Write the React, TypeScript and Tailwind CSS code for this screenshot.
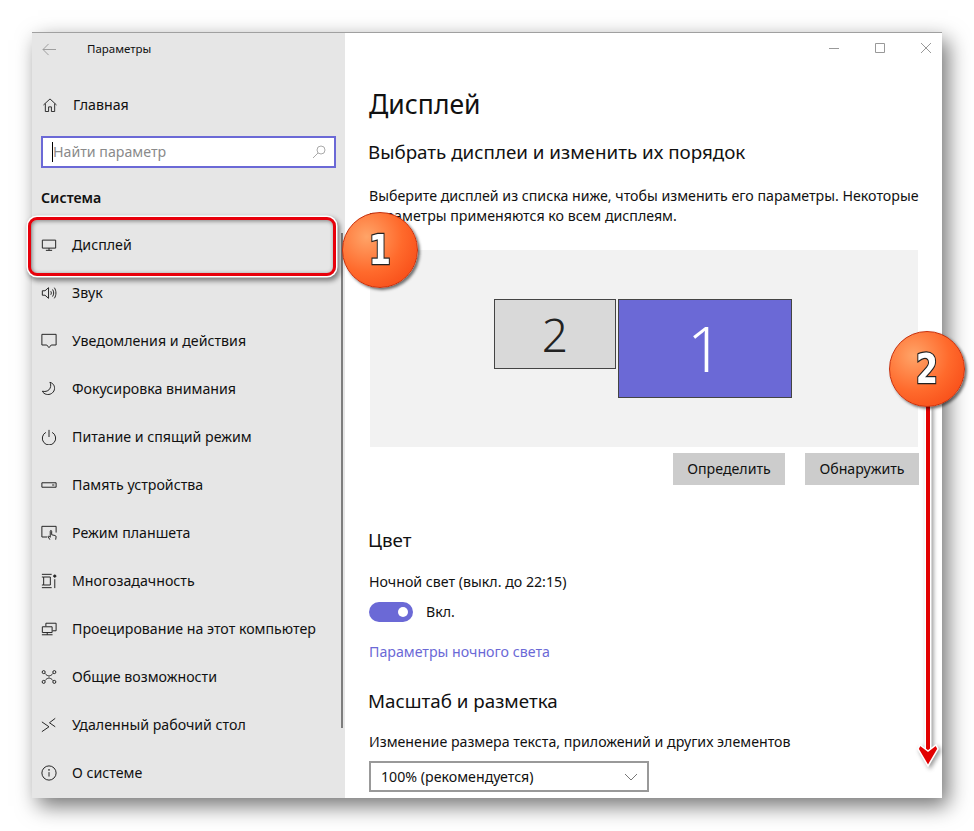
import React from 'react';

const font = 'font-["Noto_Sans",sans-serif]';

function Ico({ children }: { children: React.ReactNode }) {
  return (
    <svg width={16} height={16} viewBox="0 0 18 18" fill="none" stroke="#222" strokeWidth="1.100" className="shrink-0">
      {children}
    </svg>
  );
}

const items: { label: string; icon: React.ReactNode }[] = [
  {
    label: 'Дисплей',
    icon: (
      <Ico>
        <path d="M1.500 3.500h15v9h-15zM9 12.500v2.500M5.500 15h7" />
      </Ico>
    ),
  },
  {
    label: 'Звук',
    icon: (
      <Ico>
        <path d="M1.500 6.500h3l4-3.500v12l-4-3.500h-3zM11 7c.8 1.200.8 2.800 0 4M13 5c1.700 2.400 1.700 5.600 0 8M15 3c2.400 3.600 2.400 8.400 0 12" />
      </Ico>
    ),
  },
  {
    label: 'Уведомления и действия',
    icon: (
      <Ico>
        <path d="M1 1.500h16v12h-5.500l-2.500 3-2.500-3H1z" />
      </Ico>
    ),
  },
  {
    label: 'Фокусировка внимания',
    icon: (
      <Ico>
        <path d="M10 1.500c4 1 6 4.500 5 8.500-1 3.500-5 6-9 5-2-.5-3.500-1.500-4.500-3.500 4 1 7.500-.5 8.800-3.500 1-2.500.7-4.800-.3-6.500z" />
      </Ico>
    ),
  },
  {
    label: 'Питание и спящий режим',
    icon: (
      <Ico>
        <path d="M9 1v8M5.500 3.800a7.500 7.500 0 1 0 7 0" />
      </Ico>
    ),
  },
  {
    label: 'Память устройства',
    icon: (
      <Ico>
        <path d="M1 6.500h16v5H1zM12.500 9H15" />
      </Ico>
    ),
  },
  {
    label: 'Режим планшета',
    icon: (
      <Ico>
        <path d="M7 13.500H1v-12h16v7M10 16.500l-1.800-3c-.4-1 .8-1.500 1.300-.7l.9 1V7c0-1.100 1.600-1.100 1.600 0v4l3.700.8c.8.200 1.300.8 1.300 1.500l-.5 3.200" />
      </Ico>
    ),
  },
  {
    label: 'Многозадачность',
    icon: (
      <Ico>
        <path d="M1 1.500h11M3 4.500h7.500v9H3zM1 16.500h11M1 4.500h2M1 13.500h2M15.500 7v10" />
        <circle cx="15.500" cy="3.500" r="1.300" fill="#222" />
      </Ico>
    ),
  },
  {
    label: 'Проецирование на этот компьютер',
    icon: (
      <Ico>
        <path d="M5.500 6V2.500h11.500V11h-4M1.500 6.500h11V13h-11zM1 15.500h12M7 13v2.500" />
      </Ico>
    ),
  },
  {
    label: 'Общие возможности',
    icon: (
      <Ico>
        <circle cx="3" cy="3.500" r="1.700" />
        <circle cx="15" cy="3.500" r="1.700" />
        <circle cx="3" cy="14.500" r="1.700" />
        <circle cx="15" cy="14.500" r="1.700" />
        <path d="M4.300 4.800c2 2.200 2 2.200 4.700 3.200 2.700-1 2.700-1 4.700-3.200M4.300 13.200c2-2.200 2-2.200 4.700-3.200 2.700 1 2.700 1 4.700 3.200" />
      </Ico>
    ),
  },
  {
    label: 'Удаленный рабочий стол',
    icon: (
      <Ico>
        <path d="M1 5.500 9 11l-8 5.500M16 1.500 9.500 6.500l6.500 4.500" />
      </Ico>
    ),
  },
  {
    label: 'О системе',
    icon: (
      <Ico>
        <circle cx="9" cy="9" r="8" />
        <path d="M9 8v5" />
        <circle cx="9" cy="5.500" r=".9" fill="#222" stroke="none" />
      </Ico>
    ),
  },
];

function Sidebar() {
  return (
    <aside className="relative w-[313px] shrink-0 bg-[#e6e6e6] flex flex-col">
      <div className="flex items-center h-[32px] pl-[10px]">
        <svg width="15" height="13" viewBox="0 0 16 14" fill="none" stroke="#999" strokeWidth="1">
          <path d="M15 7H1M7 1 1 7l6 6" />
        </svg>
        <span className="ml-[30px] text-[11.500px] text-[#111]">Параметры</span>
      </div>
      <div className="flex items-center h-[48px] mt-[16px] pl-[11px] gap-[16px]">
        <svg width="14" height="14" viewBox="0 0 15 15" fill="none" stroke="#222" strokeWidth="1">
          <path d="M.5 7.500 7.500 1l7 6.500M2.500 6v8.500h3.500V9.500h3v5h3.500V6" />
        </svg>
        <span className="text-[14.200px] text-[#111]">Главная</span>
      </div>
      <div className="mx-[9px] mt-[7px] h-[32px] border-2 border-[#6b69d6] bg-white flex items-center pl-[9px] pr-[8px]">
        <span className="w-px h-[20px] bg-black" />
        <span className="flex-1 text-[14.200px] text-[#8a8a8a]">Найти параметр</span>
        <svg width="14" height="14" viewBox="0 0 14 14" fill="none" stroke="#aaa" strokeWidth="1">
          <circle cx="9" cy="5" r="4" />
          <path d="M6 8l-5 5" />
        </svg>
      </div>
      <div className="ml-[9px] mt-[19px] text-[14.200px] leading-[22px] font-semibold text-[#111]">Система</div>
      <div className="mt-[12px] flex flex-col">
        {items.map((it) => (
          <div key={it.label} className="flex items-center h-[48px] pl-[9px] gap-[15px]">
            {it.icon}
            <span className="text-[14.200px] text-[#111] whitespace-nowrap">{it.label}</span>
          </div>
        ))}
      </div>
      <div className="absolute right-[2px] top-[200px] bottom-[70px] w-[2px] bg-[#7d7d7d]" />
    </aside>
  );
}

function Main() {
  return (
    <main className="flex-1 bg-white relative pl-[24px] flex flex-col overflow-hidden text-[#111]">
      <div className="absolute right-0 top-0 flex items-center h-[31px]">
        <svg width="120" height="31" viewBox="0 0 120 31" fill="none" stroke="#999" strokeWidth="1">
          <path d="M7 15.500h10M53.500 10.500h9v9h-9zM99 10l10 10M109 10 99 20" />
        </svg>
      </div>
      <h1 className="mt-[51px] text-[26.500px] leading-[40px] font-normal">Дисплей</h1>
      <h2 className="mt-[15px] -ml-[1px] text-[18.800px] leading-[26px]">Выбрать дисплеи и изменить их порядок</h2>
      <p className="mt-[21px] w-[555px] text-[14.200px] leading-[20px]">
        Выберите дисплей из списка ниже, чтобы изменить его параметры. Некоторые параметры применяются ко всем дисплеям.
      </p>
      <div className="mt-[24px] ml-px w-[548px] h-[197px] bg-[#f2f2f2] flex items-start pt-[49px] pl-[124px] gap-[2px]">
        <div className="w-[122px] h-[70px] bg-[#d9d9d9] border border-[#444] flex items-center justify-center text-[46px] font-light text-[#222]">
          2
        </div>
        <div className="w-[174px] h-[99px] bg-[#6b69d6] border border-[#444] flex items-center justify-center text-[62px] font-light text-white">
          1
        </div>
      </div>
      <div className="mt-[6px] ml-[304px] flex gap-[20px]">
        <div className="w-[112px] h-[32px] bg-[#cccccc] flex items-center justify-center text-[14.200px]">Определить</div>
        <div className="w-[114px] h-[32px] bg-[#cccccc] flex items-center justify-center text-[14.200px]">Обнаружить</div>
      </div>
      <h2 className="mt-[42px] -ml-[1px] text-[18.800px] leading-[26px]">Цвет</h2>
      <div className="mt-[19px] text-[14.200px] leading-[20px]">Ночной свет (выкл. до 22:15)</div>
      <div className="mt-[9px] flex items-center gap-[13px]">
        <div className="w-[44px] h-[20px] rounded-full bg-[#6b69d6] flex items-center justify-end pr-[5px]">
          <span className="w-[10px] h-[10px] rounded-full bg-white" />
        </div>
        <span className="text-[14.200px]">Вкл.</span>
      </div>
      <div className="mt-[20px] text-[14.200px] leading-[20px] text-[#6b69d6]">Параметры ночного света</div>
      <h2 className="mt-[26px] -ml-[1px] text-[18.800px] leading-[26px]">Масштаб и разметка</h2>
      <div className="mt-[18px] text-[14.200px] leading-[20px]">Изменение размера текста, приложений и других элементов</div>
      <div className="mt-[9px] w-[280px] h-[31px] shrink-0 border-2 border-[#999] flex items-center justify-between pl-[10px] pr-[9px] text-[14.200px]">
        <span>100% (рекомендуется)</span>
        <svg width="14" height="8" viewBox="0 0 14 8" fill="none" stroke="#777" strokeWidth="1">
          <path d="M1 1l6 6 6-6" />
        </svg>
      </div>
    </main>
  );
}

function Badge({ n, className }: { n: string; className: string }) {
  return (
    <div
      className={`absolute w-[76px] h-[76px] rounded-full border border-[#c8300c] bg-[radial-gradient(circle_at_32%_32%,#ffa468,#ff6a2c_50%,#f4400f)] shadow-[2px_2px_3px_rgba(0,0,0,0.55)] flex items-center justify-center font-["DejaVu_Sans",sans-serif] font-bold text-[40px] text-white [-webkit-text-stroke:2.500px_#222] [paint-order:stroke_fill] ${className}`}
    >
      <span className="inline-block scale-x-[0.8]">{n}</span>
    </div>
  );
}

export default function App() {
  return (
    <div className={`relative w-[974px] h-[831px] bg-white overflow-hidden ${font}`}>
      <div className="pt-[32px] pl-[32px]">
        <div className="w-[910px] h-[766px] flex overflow-hidden border-t border-[#a0a0a0] shadow-[6px_8px_20px_rgba(0,0,0,0.55)]">
          <Sidebar />
          <Main />
        </div>
      </div>
      <div className="absolute left-[28px] top-[217px] w-[308px] h-[59px] rounded-[9px] border-[3px] border-[#e8000b] shadow-[0_0_0_1.500px_#fff,2px_3px_5px_2px_rgba(0,0,0,0.45),inset_1px_1px_4px_rgba(0,0,0,0.45)]" />
      <Badge n="1" className="left-[342px] top-[212px]" />
      <svg className="absolute left-[912px] top-[405px] drop-shadow-[2px_2px_2px_rgba(0,0,0,0.4)]" width="32" height="366" viewBox="0 0 32 366" fill="none">
        <path d="M16 0v350" stroke="#fff" strokeWidth="7" />
        <path d="M16 0v350" stroke="#e20000" strokeWidth="4" />
        <path d="M8 340l8 6 8-6 2 4L16 361 6 344z" fill="#e20000" stroke="#fff" strokeWidth="1.500" />
      </svg>
      <Badge n="2" className="left-[889px] top-[331px]" />
    </div>
  );
}
